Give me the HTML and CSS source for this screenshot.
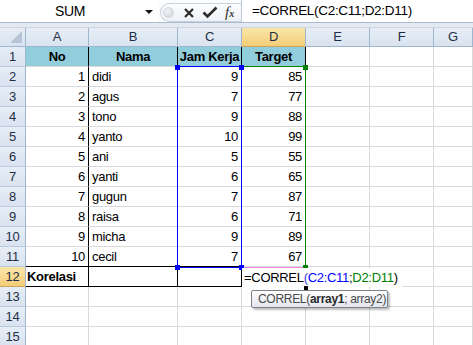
FILE: index.html
```html
<!DOCTYPE html>
<html lang="id">
<head>
  <meta charset="UTF-8">
  <title>CORREL</title>
  <link rel="stylesheet" href="styles.css">
</head>
<body>

  <!-- formula bar -->
  <div class="fbar">
    <div class="name">SUM</div>
    <div class="drop"><span class="arrow"></span></div>
    <div class="tools">
      <div class="pill">
        <span class="knob"></span>
        <svg class="ico" width="12" height="12" viewBox="0 0 12 12"><path d="M2 2 L10 10 M10 2 L2 10" stroke="#2b2b2b" stroke-width="2.2"/></svg>
        <svg class="ico" width="16" height="13" viewBox="0 0 16 13"><path d="M1.5 6.5 L5.5 10.5 L14.5 1.5" fill="none" stroke="#2b2b2b" stroke-width="2.6"/></svg>
        <span class="fx"><i>f</i><small>x</small></span>
      </div>
    </div>
    <div class="input">=CORREL(C2:C11;D2:D11)</div>
  </div>
  <div class="strip"></div>

  <!-- sheet -->
  <div class="sheet">
    <div class="c corner"><span class="tri"></span></div>
    <div class="c h">A</div><div class="c h">B</div><div class="c h">C</div><div class="c h sel">D</div><div class="c h">E</div><div class="c h">F</div><div class="c h">G</div>

    <div class="c rh">1</div><div class="c hd kb">No</div><div class="c hd kb">Nama</div><div class="c hd kb">Jam Kerja</div><div class="c hd kb">Target</div><div class="c"></div><div class="c"></div><div class="c"></div>
    <div class="c rh">2</div><div class="c num kb">1</div><div class="c kb">didi</div><div class="c num kb">9</div><div class="c num">85</div><div class="c"></div><div class="c"></div><div class="c"></div>
    <div class="c rh">3</div><div class="c num kb">2</div><div class="c kb">agus</div><div class="c num kb">7</div><div class="c num">77</div><div class="c"></div><div class="c"></div><div class="c"></div>
    <div class="c rh">4</div><div class="c num kb">3</div><div class="c kb">tono</div><div class="c num kb">9</div><div class="c num">88</div><div class="c"></div><div class="c"></div><div class="c"></div>
    <div class="c rh">5</div><div class="c num kb">4</div><div class="c kb">yanto</div><div class="c num kb">10</div><div class="c num">99</div><div class="c"></div><div class="c"></div><div class="c"></div>
    <div class="c rh">6</div><div class="c num kb">5</div><div class="c kb">ani</div><div class="c num kb">5</div><div class="c num">55</div><div class="c"></div><div class="c"></div><div class="c"></div>
    <div class="c rh">7</div><div class="c num kb">6</div><div class="c kb">yanti</div><div class="c num kb">6</div><div class="c num">65</div><div class="c"></div><div class="c"></div><div class="c"></div>
    <div class="c rh">8</div><div class="c num kb">7</div><div class="c kb">gugun</div><div class="c num kb">7</div><div class="c num">87</div><div class="c"></div><div class="c"></div><div class="c"></div>
    <div class="c rh">9</div><div class="c num kb">8</div><div class="c kb">raisa</div><div class="c num kb">6</div><div class="c num">71</div><div class="c"></div><div class="c"></div><div class="c"></div>
    <div class="c rh">10</div><div class="c num kb">9</div><div class="c kb">micha</div><div class="c num kb">9</div><div class="c num">89</div><div class="c"></div><div class="c"></div><div class="c"></div>
    <div class="c rh">11</div><div class="c num kb bb">10</div><div class="c kb bb">cecil</div><div class="c num kb bb">7</div><div class="c num">67</div><div class="c"></div><div class="c"></div><div class="c"></div>
    <div class="c rh sel">12</div><div class="c b kb bb">Korelasi</div><div class="c kb bb"></div><div class="c kb bb"></div><div class="c"></div><div class="c"></div><div class="c"></div><div class="c"></div>
    <div class="c rh">13</div><div class="c"></div><div class="c"></div><div class="c"></div><div class="c"></div><div class="c"></div><div class="c"></div><div class="c"></div>
    <div class="c rh">14</div><div class="c"></div><div class="c"></div><div class="c"></div><div class="c"></div><div class="c"></div><div class="c"></div><div class="c"></div>
    <div class="c rh">15</div><div class="c"></div><div class="c"></div><div class="c"></div><div class="c"></div><div class="c"></div><div class="c"></div><div class="c"></div>

    <!-- range highlights while editing D12 -->
    <div class="range green"></div>
    <div class="range blue"></div>
    <span class="dot b1"></span><span class="dot b2"></span><span class="dot b3"></span><span class="dot b4"></span>
    <span class="dot g1"></span><span class="dot g2"></span>

    <div class="edit">=CORREL<span class="par">(</span><span class="rc">C2:C11</span>;<span class="rd">D2:D11</span>)</div>
    <span class="handle"></span>
    <div class="tip">CORREL(<b>array1</b>; array2)</div>
  </div>

</body>
</html>
```

FILE: styles.css
```css
* { box-sizing: border-box; }
body {
  margin: 0;
  font-family: 'Liberation Sans', Arial, sans-serif;
  font-size: 13px;
  letter-spacing: -0.3px;
  color: #000;
  background: #fff;
  overflow: hidden;
  width: 473px;
  height: 345px;
}

/* formula bar */
.fbar {
  display: flex;
  height: 23px;
  border-bottom: 1px solid #aab9cc;
}
.name { width: 140px; text-align: center; line-height: 22px; font-size: 14px; }
.drop { width: 18px; position: relative; }
.arrow {
  position: absolute;
  left: 5px; top: 10px;
  border-left: 4px solid transparent;
  border-right: 4px solid transparent;
  border-top: 4px solid #111;
}
.tools { width: 83px; padding: 3px 0 0 2px; background: #fbfcfd; }
.pill {
  display: flex;
  align-items: center;
  height: 19px;
  border: 1px solid #c9d2dd;
  border-right: none;
  border-radius: 10px 0 0 10px;
  background: linear-gradient(#fdfdfe, #eef1f5);
}
.knob {
  width: 11px; height: 11px;
  margin-left: 2px;
  border-radius: 50%;
  background: radial-gradient(circle at 40% 35%, #f4f5f7, #c9ced6);
  border: 1px solid #d3d8df;
}
.ico { margin-left: 9px; }
.ico + .ico { margin-left: 7px; }
.fx { margin-left: 7px; font-family: 'Liberation Serif', serif; font-size: 15px; color: #333; letter-spacing: 0; }
.fx small { font-size: 10px; font-style: italic; font-weight: bold; }
.input {
  flex: 1;
  border-left: 1px solid #c0cad6;
  padding-left: 10px;
  line-height: 22px;
  font-size: 13.5px;
}
.strip { height: 5px; background: #e4eaf2; border-bottom: 1px solid #ccd6e2; }

/* grid */
.sheet {
  position: relative;
  display: grid;
  grid-template-columns: 26px 63px 89px 64px 64px 64px 64px 1fr;
  grid-template-rows: 19px;
  grid-auto-rows: 20px;
}
.c {
  border-right: 1px solid #d9d9d9;
  border-bottom: 1px solid #d9d9d9;
  padding: 0 3px;
  line-height: 19px;
  white-space: nowrap;
  overflow: hidden;
}
.h, .rh, .corner {
  background: linear-gradient(#e6edf6, #d9e3ef);
  border-right-color: #9eb6ce;
  border-bottom-color: #9eb6ce;
  color: #1e2f45;
  text-align: center;
  padding: 0;
  line-height: 18px;
}
.rh { border-bottom-color: #bccbdc; line-height: 19px; }
.sel { background: linear-gradient(#fae6a8, #f4cd78); border-bottom-color: #c9a85a; }
.corner { position: relative; }
.tri {
  position: absolute;
  right: 3px; bottom: 3px;
  border-left: 12px solid transparent;
  border-bottom: 12px solid #b6c5d7;
}
.hd { background: #92cddc; font-weight: bold; text-align: center; padding: 0; }
.num { text-align: right; }
.b { font-weight: bold; padding-left: 1px; }
.kb { border-right-color: #000; }
.bb { border-bottom-color: #000; }

/* range boxes */
.range { position: absolute; top: 38px; height: 202px; width: 65px; }
.blue { left: 177px; border: 1px solid #0000ff; }
.green { left: 241px; border: 1px solid #008000; border-bottom-color: #f08ae8; }
.dot { position: absolute; width: 5px; height: 5px; background: #0000ff; }
.b1 { left: 175px; top: 37px; }
.b2 { left: 239px; top: 37px; }
.b3 { left: 175px; top: 237px; }
.b4 { left: 239px; top: 237px; }
.g1, .g2 { background: #008000; left: 303px; }
.g1 { top: 37px; }
.g2 { top: 237px; }

.edit {
  position: absolute;
  left: 242px; top: 240px;
  width: 160px; height: 19px;
  background: #fff;
  padding-left: 2px;
  line-height: 19px;
  white-space: nowrap;
}
.par { color: #3b3bd0; }
.rc { color: #0000ff; }
.rd { color: #008000; }
.handle { position: absolute; left: 304px; top: 258px; width: 4px; height: 4px; background: #000; }

.tip {
  position: absolute;
  left: 251px; top: 262px;
  width: 137px; height: 18px;
  padding-left: 6px;
  border: 1px solid #7d7f86;
  border-radius: 2px;
  background: linear-gradient(#ffffff, #e4e6ef);
  box-shadow: 2px 2px 2px rgba(0, 0, 0, 0.25);
  font-size: 12px;
  line-height: 16px;
  letter-spacing: -0.3px;
  white-space: nowrap;
  color: #4a4a4a;
}
.tip b { color: #2a2a2a; }
```
